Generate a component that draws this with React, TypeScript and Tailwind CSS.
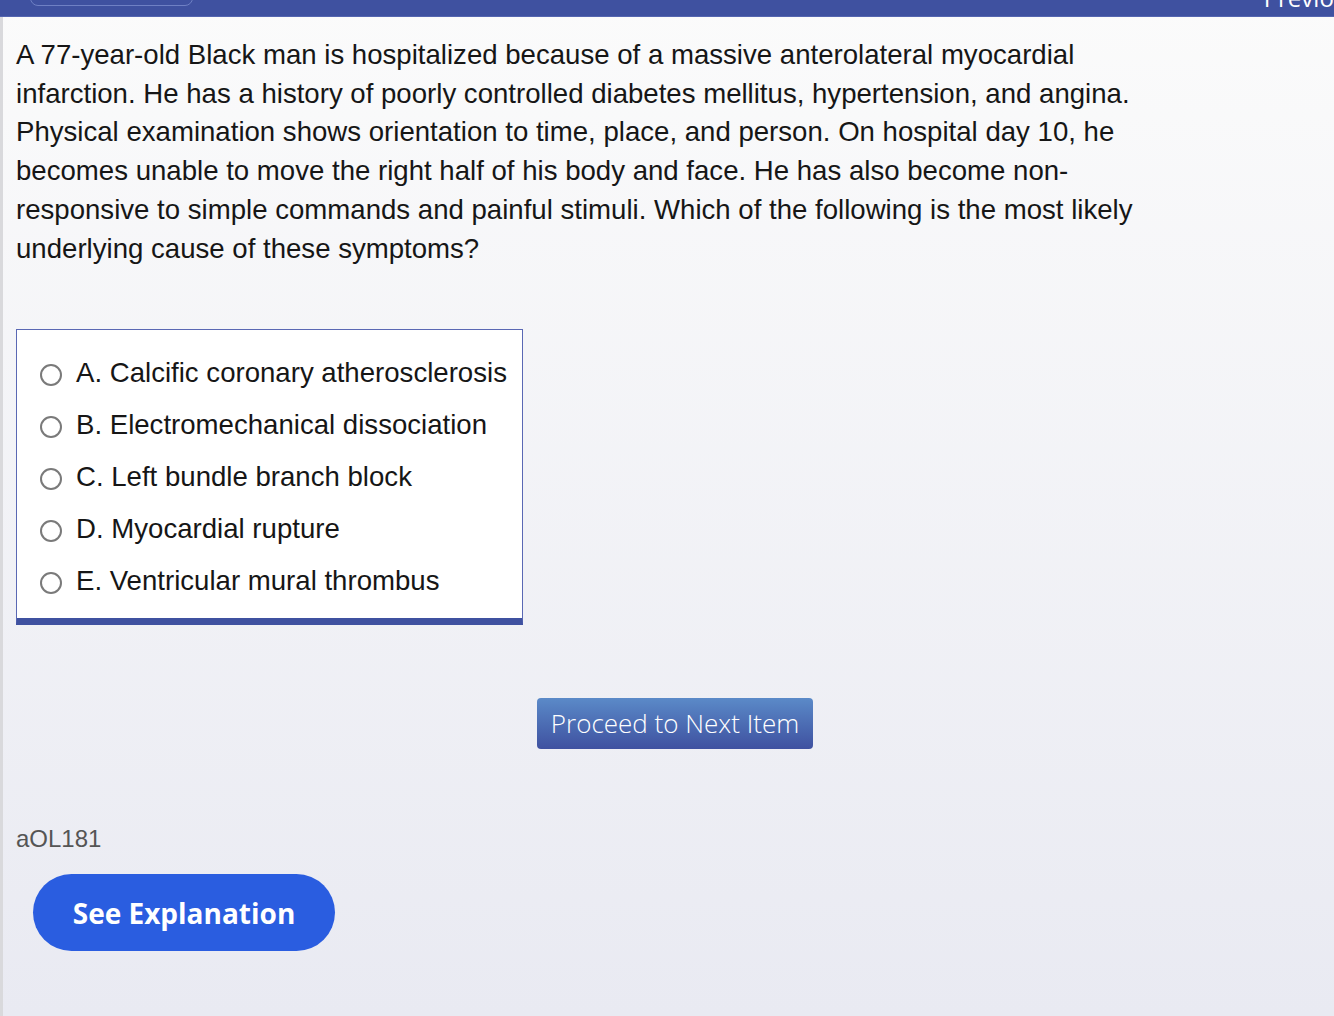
import React from "react"

const options = [
  "A. Calcific coronary atherosclerosis",
  "B. Electromechanical dissociation",
  "C. Left bundle branch block",
  "D. Myocardial rupture",
  "E. Ventricular mural thrombus",
]

const App = () => {
  return (
    <div className="w-[1334px] h-[1016px] overflow-hidden flex flex-col bg-gradient-to-b from-[#fbfbfb] to-[#e9eaf2] font-['Liberation_Sans',Arial,sans-serif]">
      {/* top bar, partly scrolled out of view */}
      <div className="h-[17px] shrink-0 bg-[#3f51a0] border-b border-[#5566b0] flex justify-between items-start overflow-hidden">
        <div className="ml-[30px] -mt-[26px] h-[32px] w-[163px] rounded-[8px] border border-[#6f80c4] flex items-end justify-center pb-[3px] text-white text-[24px] leading-none font-['Open_Sans',sans-serif]">
          Block: 1 of 1
        </div>
        <div className="-mt-[14px] mr-[-26px] text-white text-[24px] leading-none font-['Open_Sans',sans-serif]">
          Previous
        </div>
      </div>

      <div className="flex-1 border-l-[3px] border-[#d9d9dc] pl-[13px]">
        <p className="w-[1150px] pt-[19px] text-[27.6px] leading-[38.7px] text-[#161616]">
          A 77-year-old Black man is hospitalized because of a massive anterolateral myocardial infarction. He has a history of poorly controlled diabetes mellitus, hypertension, and angina. Physical examination shows orientation to time, place, and person. On hospital day 10, he becomes unable to move the right half of his body and face. He has also become non-responsive to simple commands and painful stimuli. Which of the following is the most likely underlying cause of these symptoms?
        </p>

        <div className="mt-[61px] w-[507px] h-[296px] bg-white border border-[#5a68b4] border-b-[7px] border-b-[#3f51a0] pt-[16px]">
          {options.map((opt) => (
            <label key={opt} className="flex items-center h-[52px] pl-[23px] text-[27.6px] text-[#161616] cursor-pointer">
              <span className="w-[22px] h-[22px] mt-[6px] rounded-full border-2 border-[#7a7a7a] bg-white shrink-0" />
              <span className="ml-[14px]">{opt}</span>
            </label>
          ))}
        </div>

        <div className="mt-[73px] flex justify-center">
          <button className="h-[51px] w-[276px] rounded-[4px] bg-gradient-to-b from-[#5b8ac8] to-[#3f51a0] text-white text-[26px] font-['Open_Sans',sans-serif] font-light">
            Proceed to Next Item
          </button>
        </div>

        <div className="mt-[78px] text-[24px] leading-none text-[#555]">aOL181</div>

        <button className="mt-[23px] ml-[17px] h-[77px] w-[302px] rounded-full bg-[#2a5de0] text-white text-[28px] font-bold font-['Open_Sans',sans-serif]">
          See Explanation
        </button>
      </div>
    </div>
  )
}

export default App
